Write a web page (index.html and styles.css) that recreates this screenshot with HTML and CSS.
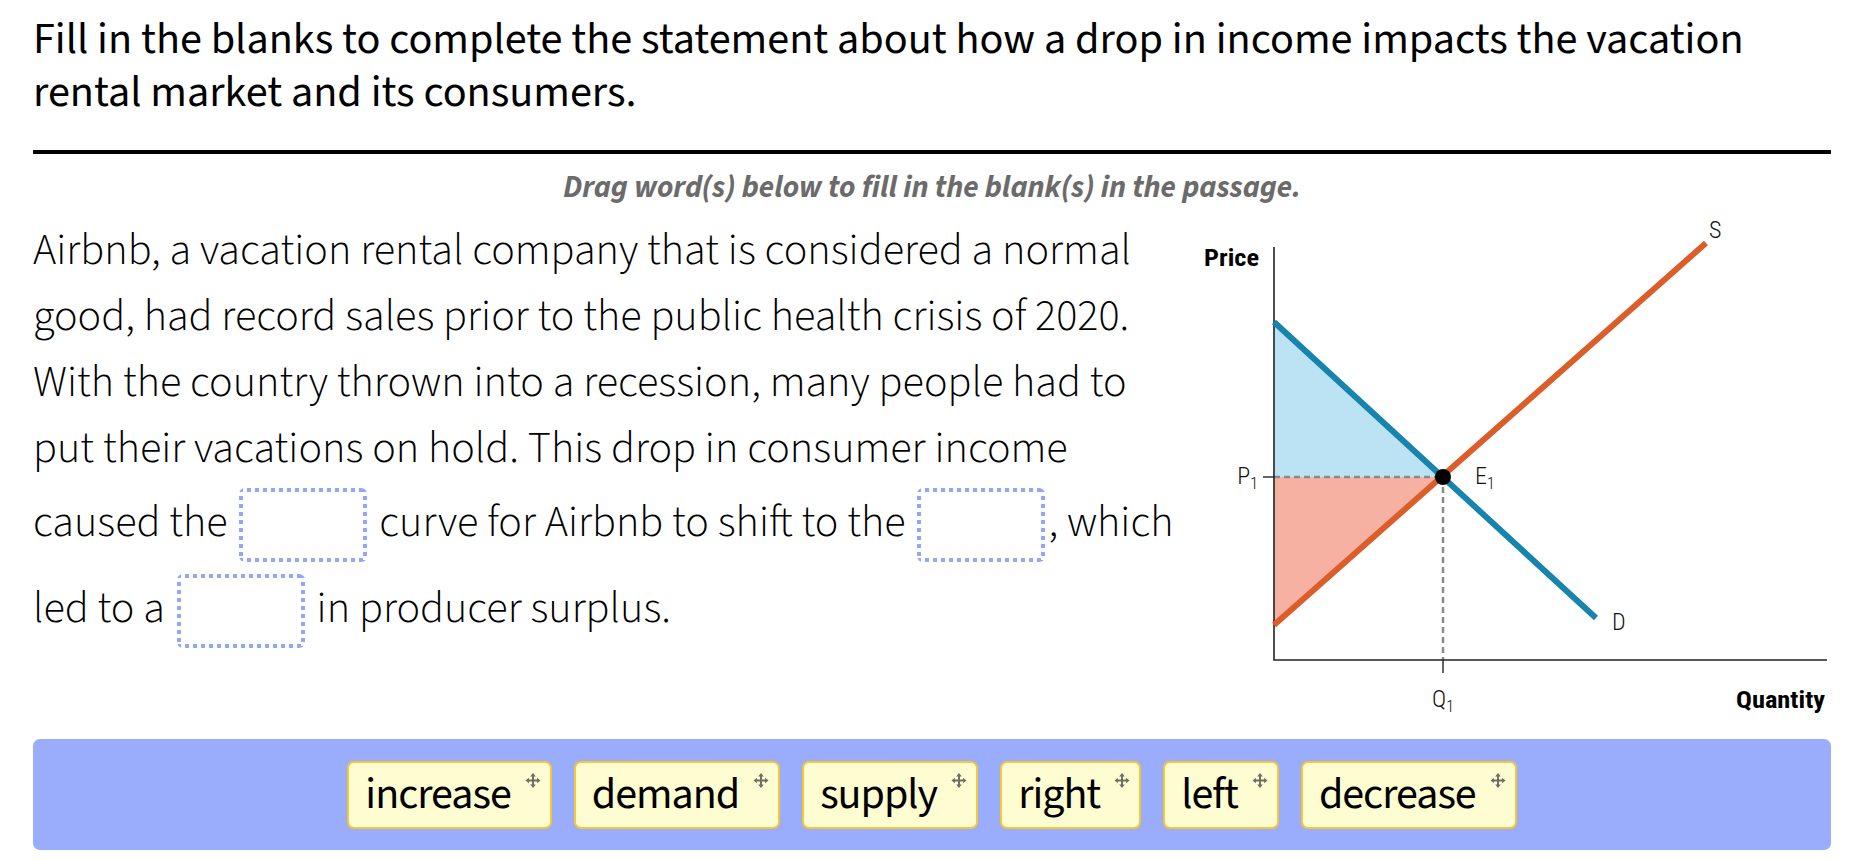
FILE: index.html
```html
<!DOCTYPE html>
<html lang="en">
<head>
<meta charset="utf-8">
<title>Fill in the blanks</title>
<link rel="stylesheet" href="styles.css">
</head>
<body>
<div class="page">
  <h1 class="prompt">Fill in the blanks to complete the statement about how a drop in income impacts the vacation<br>rental market and its consumers.</h1>
  <p class="instructions">Drag word(s) below to fill in the blank(s) in the passage.</p>
  <div class="main">
    <p class="passage">Airbnb, a vacation rental company that is considered a normal<br>good, had record sales prior to the public health crisis of 2020.<br>With the country thrown into a recession, many people had to<br>put their vacations on hold. This drop in consumer income<br>caused the <span class="blank"></span> curve for Airbnb to shift to the <span class="blank"></span>, which<br>led to a <span class="blank"></span> in producer surplus.</p>
    <svg class="chart" viewBox="0 0 640 510" width="640" height="510">
      <g transform="translate(0 10)">
        <polygon class="cs" points="83,104 83,259 252,259"/>
        <polygon class="ps" points="83,259 252,259 83,407"/>
        <line class="dash" x1="83" y1="259" x2="252" y2="259"/>
        <line class="dash" x1="252" y1="259" x2="252" y2="442"/>
        <line class="tick" x1="252" y1="442" x2="252" y2="455"/>
        <line class="tick" x1="72" y1="259" x2="83" y2="259"/>
        <polyline class="axis" points="83,29 83,442 636,442"/>
        <line class="demand" x1="83" y1="104" x2="405" y2="400"/>
        <line class="supply" x1="83" y1="407" x2="515" y2="25"/>
        <circle cx="252" cy="259" r="8"/>
        <text class="axis-label" x="13" y="48" textLength="55" lengthAdjust="spacingAndGlyphs">Price</text>
        <text class="axis-label" x="634" y="490" text-anchor="end" textLength="89" lengthAdjust="spacingAndGlyphs">Quantity</text>
        <text class="pt" x="67" y="266" text-anchor="end">P<tspan class="sub" dy="5">1</tspan></text>
        <text class="pt" x="284" y="266">E<tspan class="sub" dy="5">1</tspan></text>
        <text class="pt" x="252" y="489" text-anchor="middle">Q<tspan class="sub" dy="5">1</tspan></text>
        <text class="pt" x="421" y="412">D</text>
        <text class="pt" x="518" y="20">S</text>
      </g>
    </svg>
  </div>
  <div class="bank">
    <span class="chip">increase<svg class="move" viewBox="0 0 14 14"><path d="M7 2.5V11.5M2.5 7H11.5"/><path class="head" d="M7 0L4.4 3.2H9.6ZM7 14L4.4 10.8H9.6ZM0 7L3.2 4.4V9.6ZM14 7L10.8 4.4V9.6Z"/></svg></span>
    <span class="chip">demand<svg class="move" viewBox="0 0 14 14"><path d="M7 2.5V11.5M2.5 7H11.5"/><path class="head" d="M7 0L4.4 3.2H9.6ZM7 14L4.4 10.8H9.6ZM0 7L3.2 4.4V9.6ZM14 7L10.8 4.4V9.6Z"/></svg></span>
    <span class="chip">supply<svg class="move" viewBox="0 0 14 14"><path d="M7 2.5V11.5M2.5 7H11.5"/><path class="head" d="M7 0L4.4 3.2H9.6ZM7 14L4.4 10.8H9.6ZM0 7L3.2 4.4V9.6ZM14 7L10.8 4.4V9.6Z"/></svg></span>
    <span class="chip">right<svg class="move" viewBox="0 0 14 14"><path d="M7 2.5V11.5M2.5 7H11.5"/><path class="head" d="M7 0L4.4 3.2H9.6ZM7 14L4.4 10.8H9.6ZM0 7L3.2 4.4V9.6ZM14 7L10.8 4.4V9.6Z"/></svg></span>
    <span class="chip">left<svg class="move" viewBox="0 0 14 14"><path d="M7 2.5V11.5M2.5 7H11.5"/><path class="head" d="M7 0L4.4 3.2H9.6ZM7 14L4.4 10.8H9.6ZM0 7L3.2 4.4V9.6ZM14 7L10.8 4.4V9.6Z"/></svg></span>
    <span class="chip">decrease<svg class="move" viewBox="0 0 14 14"><path d="M7 2.5V11.5M2.5 7H11.5"/><path class="head" d="M7 0L4.4 3.2H9.6ZM7 14L4.4 10.8H9.6ZM0 7L3.2 4.4V9.6ZM14 7L10.8 4.4V9.6Z"/></svg></span>
  </div>
</div>
</body>
</html>
```
FILE: styles.css
```css
* { box-sizing: border-box; }
html, body { margin: 0; padding: 0; background: #fff; }
body { font-family: "Source Sans 3", "Roboto Condensed", sans-serif; color: #000; }

.page { padding: 13px 33px 0; }

.prompt {
  margin: 0;
  font-weight: 400;
  font-size: 44.2px;
  line-height: 53px;
  padding-bottom: 31px;
  border-bottom: 4px solid #000;
}

.instructions {
  margin: 15px 0 0;
  text-align: center;
  font-style: italic;
  font-weight: 700;
  font-size: 31px;
  line-height: 36px;
  color: #6b6b6b;
}

.main {
  display: flex;
  margin-top: 3px;
  height: 510px;
}

.passage {
  flex: 1;
  margin: 0;
  padding-top: 10px;
  font-weight: 300;
  font-size: 44.1px;
  line-height: 66px;
  white-space: nowrap;
}

.blank {
  display: inline-block;
  width: 128px;
  height: 74px;
  margin: 6px 3px;
  vertical-align: middle;
  border-radius: 6px;
  background:
    repeating-linear-gradient(90deg, #93a6fa 0 4px, transparent 4px 8px) left top / 100% 4px no-repeat,
    repeating-linear-gradient(90deg, #93a6fa 0 4px, transparent 4px 8px) left bottom / 100% 4px no-repeat,
    repeating-linear-gradient(180deg, #93a6fa 0 4px, transparent 4px 8px) left top / 4px 100% no-repeat,
    repeating-linear-gradient(180deg, #93a6fa 0 4px, transparent 4px 8px) right top / 4px 100% no-repeat;
}

.chart { flex: none; display: block; }
.chart .cs { fill: #bce3f4; }
.chart .ps { fill: #f7b1a3; }
.chart .dash { stroke: #8a8a8a; stroke-width: 2.5; stroke-dasharray: 6 4; }
.chart .tick { stroke: #333; stroke-width: 1.5; }
.chart .axis { fill: none; stroke: #222; stroke-width: 1.6; }
.chart .demand { stroke: #1784ae; stroke-width: 6; }
.chart .supply { stroke: #db5e2a; stroke-width: 6; }
.chart circle { fill: #000; }
.chart .axis-label { font-family: "Roboto Condensed", sans-serif; font-weight: 700; font-size: 23px; fill: #000; }
.chart .pt { font-family: "Roboto Condensed", sans-serif; font-weight: 300; font-size: 24px; fill: #111; }
.chart .sub { font-size: 16px; }

.bank {
  margin-top: 21px;
  height: 111px;
  background: #9aadfc;
  border-radius: 7px;
  display: flex;
  justify-content: center;
  align-items: center;
  gap: 22px;
}

.chip {
  display: inline-flex;
  align-items: center;
  height: 68px;
  padding: 0 8px 0 16px;
  background: #fefcd1;
  border: 2px solid #f7c634;
  border-radius: 7px;
  font-size: 44px;
  font-weight: 400;
  letter-spacing: -1px;
  line-height: 1;
  color: #000;
}

.move {
  width: 18px;
  height: 15px;
  margin-left: 13px;
  align-self: flex-start;
  margin-top: 10px;
}
.move path { stroke: #6e6e64; stroke-width: 1.8; fill: none; }
.move path.head { stroke: none; fill: #6e6e64; }
```
